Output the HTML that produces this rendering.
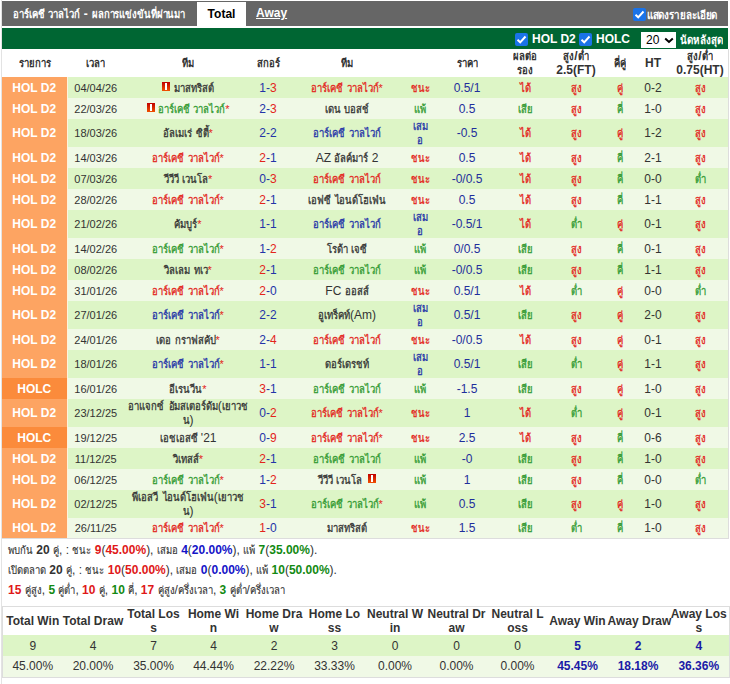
<!DOCTYPE html><html><head><meta charset="utf-8"><style>
*{margin:0;padding:0;box-sizing:border-box}
body{width:730px;height:684px;overflow:hidden;background:#fff;font-family:"Liberation Sans",sans-serif;font-size:12px;color:#333;position:relative}
i.t{font-style:normal;font-size:9.7px;font-weight:normal;-webkit-text-stroke:.25px currentColor;display:inline-block;line-height:10px;height:10px;transform:scale(.98,1.16)}
tr.hd i.t,.bar i.t,.gbar i.t{font-weight:bold;-webkit-text-stroke:0}
.vline{position:absolute;left:1px;top:0;width:1px;height:684px;background:#e3e3e3}
.bar{position:absolute;left:2px;top:1px;width:726px;height:25px;background:#666;color:#fff;font-weight:bold}
.title{position:absolute;left:11px;top:6px;white-space:nowrap}

.tab{position:absolute;left:195px;top:1px;width:49px;height:27px;background:#fff;color:#000;text-align:center;padding-top:5px;font-size:12px}
.away{position:absolute;left:254px;top:5px;text-decoration:underline;font-size:12px}
.cb{position:absolute;width:13px;height:13px;border-radius:2px;background:#1a73e8}
.cb svg{position:absolute;left:0;top:0}
.det{position:absolute;left:644px;top:7px;white-space:nowrap}
.det i.t{font-size:10px}
.gbar{position:absolute;left:2px;top:28px;width:726px;height:21px;background:#006633;color:#fff;font-weight:bold}
.gbar span.l{position:absolute;top:4px;white-space:nowrap;font-size:12px}
.sel{position:absolute;left:639px;top:4px;width:35px;height:16px;background:#fff;color:#000;font-weight:normal;font-size:12px;padding-left:5px;line-height:16px}
.last{position:absolute;left:678px;top:5px;white-space:nowrap}
.last i.t{font-size:10px}
table.m{position:absolute;left:2px;top:49px;width:726px;border-collapse:collapse;table-layout:fixed}
table.m td{text-align:center;vertical-align:middle;padding:0;line-height:14px;white-space:nowrap}
tr.hd{height:28px;background:#fff;font-weight:bold}
tr.hd td{color:#333}
tr.g1{background:#ddf5c6}
tr.g2{background:#f0f9e6}
td.hol{background:#fda462;color:#fff;font-weight:bold;border-right:1px solid #fff3dd}
td.holc{background:#fb8b3b;color:#fff;font-weight:bold;border-right:1px solid #fff3dd}
td.dt{font-size:11px;color:#333}
td.od{color:#1f2e9c}
td.ht{color:#333}
.star{color:#e3241b;font-size:11px}
.card{display:inline-block;width:8px;height:9px;background:linear-gradient(#c00000,#f05000);position:relative;vertical-align:1px}
.card:after{content:"";position:absolute;left:3px;top:1px;width:2px;height:7px;background:#fff}
.sum{position:absolute;left:8px;white-space:nowrap;color:#333}
.sum b{font-weight:bold}
.sum i.t{font-weight:normal;-webkit-text-stroke:.1px currentColor}
table.s{position:absolute;left:2px;top:606px;width:727px;border-collapse:collapse;table-layout:fixed;border:1px solid #ddd}
table.s td{text-align:center;vertical-align:middle;padding:0;line-height:14px;white-space:nowrap}
table.s tr.h{height:28px;background:#fff;font-weight:bold;color:#333}
table.s tr.v1{height:21px;background:#ddf5c6}
table.s tr.v2{height:21px;background:#f0f9e6}
table.s .aw{color:#1a1aa6;font-weight:bold}
</style></head><body>
<div class="vline"></div>
<div class="bar"><div class="title"><i class="t">อาร์เคชี</i> <i class="t">วาลไวก์</i> - <i class="t">ผลการแข่งขันที่ผ่านมา</i></div>
<div class="tab">Total</div><div class="away">Away</div>
<div class="cb" style="left:631px;top:7px"><svg width="13" height="13" viewBox="0 0 13 13"><path d="M2.5 6.8 L5.2 9.3 L10.5 3.5" stroke="#fff" stroke-width="2" fill="none"/></svg></div><div class="det"><i class="t">แสดงรายละเอียด</i></div></div>
<div class="gbar">
<div class="cb" style="left:513px;top:5px"><svg width="13" height="13" viewBox="0 0 13 13"><path d="M2.5 6.8 L5.2 9.3 L10.5 3.5" stroke="#fff" stroke-width="2" fill="none"/></svg></div><span class="l" style="left:530px">HOL D2</span>
<div class="cb" style="left:577px;top:5px"><svg width="13" height="13" viewBox="0 0 13 13"><path d="M2.5 6.8 L5.2 9.3 L10.5 3.5" stroke="#fff" stroke-width="2" fill="none"/></svg></div><span class="l" style="left:594px">HOLC</span>
<div class="sel">20<svg style="position:absolute;left:23px;top:5px" width="10" height="7" viewBox="0 0 10 7"><path d="M1.2 1.5 L5 5 L8.8 1.5" stroke="#000" stroke-width="2" fill="none"/></svg></div>
<div class="last"><i class="t">นัดหลังสุด</i></div></div>
<table class="m"><col style="width:65px"><col style="width:57px"><col style="width:128px"><col style="width:32px"><col style="width:126px"><col style="width:20px"><col style="width:74px"><col style="width:42px"><col style="width:60px"><col style="width:28px"><col style="width:38px"><col style="width:56px"><tr class="hd"><td><i class="t">รายการ</i></td><td><i class="t">เวลา</i></td><td><i class="t">ทีม</i></td><td><i class="t">สกอร์</i></td><td><i class="t">ทีม</i></td><td></td><td><i class="t">ราคา</i></td><td><i class="t">ผลต่อ</i><br><i class="t">รอง</i></td><td><i class="t">สูง</i>/<i class="t">ต่ำ</i><br>2.5(FT)</td><td><i class="t">คี่คู่</i></td><td>HT</td><td><i class="t">สูง</i>/<i class="t">ต่ำ</i><br>0.75(HT)</td></tr><tr class="g1" style="height:21px"><td class="hol">HOL D2</td><td class="dt">04/04/26</td><td class="tm"><span style="color:#333"><span class="card"></span> <i class="t">มาสทริสต์</i></span></td><td class="sc"><span style="color:#2433a8">1-</span><span style="color:#e3241b">3</span></td><td class="tm"><span style="color:#e3241b"><i class="t">อาร์เคชี</i> <i class="t">วาลไวก์</i><span class="star">*</span></span></td><td class="rs" style="color:#e3241b"><i class="t">ชนะ</i></td><td class="od">0.5/1</td><td><span style="color:#e3241b"><i class="t">ได้</i></span></td><td><span style="color:#e3241b"><i class="t">สูง</i></span></td><td><span style="color:#e3241b"><i class="t">คู่</i></span></td><td class="ht">0-2</td><td><span style="color:#e3241b"><i class="t">สูง</i></span></td></tr><tr class="g2" style="height:21px"><td class="hol">HOL D2</td><td class="dt">22/03/26</td><td class="tm"><span style="color:#319a31"><span class="card"></span> <i class="t">อาร์เคชี</i> <i class="t">วาลไวก์</i><span class="star">*</span></span></td><td class="sc"><span style="color:#2433a8">2-</span><span style="color:#e3241b">3</span></td><td class="tm"><span style="color:#333"><i class="t">เดน</i> <i class="t">บอสช์</i></span></td><td class="rs" style="color:#319a31"><i class="t">แพ้</i></td><td class="od">0.5</td><td><span style="color:#319a31"><i class="t">เสีย</i></span></td><td><span style="color:#e3241b"><i class="t">สูง</i></span></td><td><span style="color:#319a31"><i class="t">คี่</i></span></td><td class="ht">1-0</td><td><span style="color:#e3241b"><i class="t">สูง</i></span></td></tr><tr class="g1" style="height:28px"><td class="hol">HOL D2</td><td class="dt">18/03/26</td><td class="tm"><span style="color:#333"><i class="t">อัลเมเร่</i> <i class="t">ซิตี้</i><span class="star">*</span></span></td><td class="sc"><span style="color:#2433a8">2-2</span></td><td class="tm"><span style="color:#2433a8"><i class="t">อาร์เคชี</i> <i class="t">วาลไวก์</i></span></td><td class="rs" style="color:#2433a8"><i class="t">เสม</i><br><i class="t">อ</i></td><td class="od">-0.5</td><td><span style="color:#e3241b"><i class="t">ได้</i></span></td><td><span style="color:#e3241b"><i class="t">สูง</i></span></td><td><span style="color:#e3241b"><i class="t">คู่</i></span></td><td class="ht">1-2</td><td><span style="color:#e3241b"><i class="t">สูง</i></span></td></tr><tr class="g2" style="height:21px"><td class="hol">HOL D2</td><td class="dt">14/03/26</td><td class="tm"><span style="color:#e3241b"><i class="t">อาร์เคชี</i> <i class="t">วาลไวก์</i><span class="star">*</span></span></td><td class="sc"><span style="color:#e3241b">2</span><span style="color:#2433a8">-1</span></td><td class="tm"><span style="color:#333">AZ <i class="t">อัลค์มาร์</i> 2</span></td><td class="rs" style="color:#e3241b"><i class="t">ชนะ</i></td><td class="od">0.5</td><td><span style="color:#e3241b"><i class="t">ได้</i></span></td><td><span style="color:#e3241b"><i class="t">สูง</i></span></td><td><span style="color:#319a31"><i class="t">คี่</i></span></td><td class="ht">2-1</td><td><span style="color:#e3241b"><i class="t">สูง</i></span></td></tr><tr class="g1" style="height:21px"><td class="hol">HOL D2</td><td class="dt">07/03/26</td><td class="tm"><span style="color:#333"><i class="t">วีวีวี</i> <i class="t">เวนโล</i><span class="star">*</span></span></td><td class="sc"><span style="color:#2433a8">0-</span><span style="color:#e3241b">3</span></td><td class="tm"><span style="color:#e3241b"><i class="t">อาร์เคชี</i> <i class="t">วาลไวก์</i></span></td><td class="rs" style="color:#e3241b"><i class="t">ชนะ</i></td><td class="od">-0/0.5</td><td><span style="color:#e3241b"><i class="t">ได้</i></span></td><td><span style="color:#e3241b"><i class="t">สูง</i></span></td><td><span style="color:#319a31"><i class="t">คี่</i></span></td><td class="ht">0-0</td><td><span style="color:#319a31"><i class="t">ต่ำ</i></span></td></tr><tr class="g2" style="height:21px"><td class="hol">HOL D2</td><td class="dt">28/02/26</td><td class="tm"><span style="color:#e3241b"><i class="t">อาร์เคชี</i> <i class="t">วาลไวก์</i><span class="star">*</span></span></td><td class="sc"><span style="color:#e3241b">2</span><span style="color:#2433a8">-1</span></td><td class="tm"><span style="color:#333"><i class="t">เอฟซี</i> <i class="t">ไอนด์โฮเฟ่น</i></span></td><td class="rs" style="color:#e3241b"><i class="t">ชนะ</i></td><td class="od">0.5</td><td><span style="color:#e3241b"><i class="t">ได้</i></span></td><td><span style="color:#e3241b"><i class="t">สูง</i></span></td><td><span style="color:#319a31"><i class="t">คี่</i></span></td><td class="ht">1-1</td><td><span style="color:#e3241b"><i class="t">สูง</i></span></td></tr><tr class="g1" style="height:28px"><td class="hol">HOL D2</td><td class="dt">21/02/26</td><td class="tm"><span style="color:#333"><i class="t">คัมบูร์</i><span class="star">*</span></span></td><td class="sc"><span style="color:#2433a8">1-1</span></td><td class="tm"><span style="color:#2433a8"><i class="t">อาร์เคชี</i> <i class="t">วาลไวก์</i></span></td><td class="rs" style="color:#2433a8"><i class="t">เสม</i><br><i class="t">อ</i></td><td class="od">-0.5/1</td><td><span style="color:#e3241b"><i class="t">ได้</i></span></td><td><span style="color:#319a31"><i class="t">ต่ำ</i></span></td><td><span style="color:#e3241b"><i class="t">คู่</i></span></td><td class="ht">0-1</td><td><span style="color:#e3241b"><i class="t">สูง</i></span></td></tr><tr class="g2" style="height:21px"><td class="hol">HOL D2</td><td class="dt">14/02/26</td><td class="tm"><span style="color:#319a31"><i class="t">อาร์เคชี</i> <i class="t">วาลไวก์</i><span class="star">*</span></span></td><td class="sc"><span style="color:#2433a8">1-</span><span style="color:#e3241b">2</span></td><td class="tm"><span style="color:#333"><i class="t">โรด้า</i> <i class="t">เจซี</i></span></td><td class="rs" style="color:#319a31"><i class="t">แพ้</i></td><td class="od">0/0.5</td><td><span style="color:#319a31"><i class="t">เสีย</i></span></td><td><span style="color:#e3241b"><i class="t">สูง</i></span></td><td><span style="color:#319a31"><i class="t">คี่</i></span></td><td class="ht">0-1</td><td><span style="color:#e3241b"><i class="t">สูง</i></span></td></tr><tr class="g1" style="height:21px"><td class="hol">HOL D2</td><td class="dt">08/02/26</td><td class="tm"><span style="color:#333"><i class="t">วิลเลม</i> <i class="t">ทเว</i><span class="star">*</span></span></td><td class="sc"><span style="color:#e3241b">2</span><span style="color:#2433a8">-1</span></td><td class="tm"><span style="color:#319a31"><i class="t">อาร์เคชี</i> <i class="t">วาลไวก์</i></span></td><td class="rs" style="color:#319a31"><i class="t">แพ้</i></td><td class="od">-0/0.5</td><td><span style="color:#319a31"><i class="t">เสีย</i></span></td><td><span style="color:#e3241b"><i class="t">สูง</i></span></td><td><span style="color:#319a31"><i class="t">คี่</i></span></td><td class="ht">1-1</td><td><span style="color:#e3241b"><i class="t">สูง</i></span></td></tr><tr class="g2" style="height:21px"><td class="hol">HOL D2</td><td class="dt">31/01/26</td><td class="tm"><span style="color:#e3241b"><i class="t">อาร์เคชี</i> <i class="t">วาลไวก์</i><span class="star">*</span></span></td><td class="sc"><span style="color:#e3241b">2</span><span style="color:#2433a8">-0</span></td><td class="tm"><span style="color:#333">FC <i class="t">ออสส์</i></span></td><td class="rs" style="color:#e3241b"><i class="t">ชนะ</i></td><td class="od">0.5/1</td><td><span style="color:#e3241b"><i class="t">ได้</i></span></td><td><span style="color:#319a31"><i class="t">ต่ำ</i></span></td><td><span style="color:#e3241b"><i class="t">คู่</i></span></td><td class="ht">0-0</td><td><span style="color:#319a31"><i class="t">ต่ำ</i></span></td></tr><tr class="g1" style="height:28px"><td class="hol">HOL D2</td><td class="dt">27/01/26</td><td class="tm"><span style="color:#2433a8"><i class="t">อาร์เคชี</i> <i class="t">วาลไวก์</i><span class="star">*</span></span></td><td class="sc"><span style="color:#2433a8">2-2</span></td><td class="tm"><span style="color:#333"><i class="t">อูเทร็คท์</i>(Am)</span></td><td class="rs" style="color:#2433a8"><i class="t">เสม</i><br><i class="t">อ</i></td><td class="od">0.5/1</td><td><span style="color:#319a31"><i class="t">เสีย</i></span></td><td><span style="color:#e3241b"><i class="t">สูง</i></span></td><td><span style="color:#e3241b"><i class="t">คู่</i></span></td><td class="ht">2-0</td><td><span style="color:#e3241b"><i class="t">สูง</i></span></td></tr><tr class="g2" style="height:21px"><td class="hol">HOL D2</td><td class="dt">24/01/26</td><td class="tm"><span style="color:#333"><i class="t">เดอ</i> <i class="t">กราฟสคัป</i><span class="star">*</span></span></td><td class="sc"><span style="color:#2433a8">2-</span><span style="color:#e3241b">4</span></td><td class="tm"><span style="color:#e3241b"><i class="t">อาร์เคชี</i> <i class="t">วาลไวก์</i></span></td><td class="rs" style="color:#e3241b"><i class="t">ชนะ</i></td><td class="od">-0/0.5</td><td><span style="color:#e3241b"><i class="t">ได้</i></span></td><td><span style="color:#e3241b"><i class="t">สูง</i></span></td><td><span style="color:#e3241b"><i class="t">คู่</i></span></td><td class="ht">0-1</td><td><span style="color:#e3241b"><i class="t">สูง</i></span></td></tr><tr class="g1" style="height:28px"><td class="hol">HOL D2</td><td class="dt">18/01/26</td><td class="tm"><span style="color:#2433a8"><i class="t">อาร์เคชี</i> <i class="t">วาลไวก์</i><span class="star">*</span></span></td><td class="sc"><span style="color:#2433a8">1-1</span></td><td class="tm"><span style="color:#333"><i class="t">ดอร์เดรชท์</i></span></td><td class="rs" style="color:#2433a8"><i class="t">เสม</i><br><i class="t">อ</i></td><td class="od">0.5/1</td><td><span style="color:#319a31"><i class="t">เสีย</i></span></td><td><span style="color:#319a31"><i class="t">ต่ำ</i></span></td><td><span style="color:#e3241b"><i class="t">คู่</i></span></td><td class="ht">1-1</td><td><span style="color:#e3241b"><i class="t">สูง</i></span></td></tr><tr class="g2" style="height:21px"><td class="holc">HOLC</td><td class="dt">16/01/26</td><td class="tm"><span style="color:#333"><i class="t">อีเรนวีน</i><span class="star">*</span></span></td><td class="sc"><span style="color:#e3241b">3</span><span style="color:#2433a8">-1</span></td><td class="tm"><span style="color:#319a31"><i class="t">อาร์เคชี</i> <i class="t">วาลไวก์</i></span></td><td class="rs" style="color:#319a31"><i class="t">แพ้</i></td><td class="od">-1.5</td><td><span style="color:#319a31"><i class="t">เสีย</i></span></td><td><span style="color:#e3241b"><i class="t">สูง</i></span></td><td><span style="color:#e3241b"><i class="t">คู่</i></span></td><td class="ht">1-0</td><td><span style="color:#e3241b"><i class="t">สูง</i></span></td></tr><tr class="g1" style="height:28px"><td class="hol">HOL D2</td><td class="dt">23/12/25</td><td class="tm"><span style="color:#333"><i class="t">อาแจกซ์</i> <i class="t">อัมสเตอร์ดัม</i>(<i class="t">เยาวช</i><br><i class="t">น</i>)</span></td><td class="sc"><span style="color:#2433a8">0-</span><span style="color:#e3241b">2</span></td><td class="tm"><span style="color:#e3241b"><i class="t">อาร์เคชี</i> <i class="t">วาลไวก์</i><span class="star">*</span></span></td><td class="rs" style="color:#e3241b"><i class="t">ชนะ</i></td><td class="od">1</td><td><span style="color:#e3241b"><i class="t">ได้</i></span></td><td><span style="color:#319a31"><i class="t">ต่ำ</i></span></td><td><span style="color:#e3241b"><i class="t">คู่</i></span></td><td class="ht">0-1</td><td><span style="color:#e3241b"><i class="t">สูง</i></span></td></tr><tr class="g2" style="height:21px"><td class="holc">HOLC</td><td class="dt">19/12/25</td><td class="tm"><span style="color:#333"><i class="t">เอชเอสซี</i> '21</span></td><td class="sc"><span style="color:#2433a8">0-</span><span style="color:#e3241b">9</span></td><td class="tm"><span style="color:#e3241b"><i class="t">อาร์เคชี</i> <i class="t">วาลไวก์</i><span class="star">*</span></span></td><td class="rs" style="color:#e3241b"><i class="t">ชนะ</i></td><td class="od">2.5</td><td><span style="color:#e3241b"><i class="t">ได้</i></span></td><td><span style="color:#e3241b"><i class="t">สูง</i></span></td><td><span style="color:#319a31"><i class="t">คี่</i></span></td><td class="ht">0-6</td><td><span style="color:#e3241b"><i class="t">สูง</i></span></td></tr><tr class="g1" style="height:21px"><td class="hol">HOL D2</td><td class="dt">11/12/25</td><td class="tm"><span style="color:#333"><i class="t">วิเทสส์</i><span class="star">*</span></span></td><td class="sc"><span style="color:#e3241b">2</span><span style="color:#2433a8">-1</span></td><td class="tm"><span style="color:#319a31"><i class="t">อาร์เคชี</i> <i class="t">วาลไวก์</i></span></td><td class="rs" style="color:#319a31"><i class="t">แพ้</i></td><td class="od">-0</td><td><span style="color:#319a31"><i class="t">เสีย</i></span></td><td><span style="color:#e3241b"><i class="t">สูง</i></span></td><td><span style="color:#319a31"><i class="t">คี่</i></span></td><td class="ht">1-0</td><td><span style="color:#e3241b"><i class="t">สูง</i></span></td></tr><tr class="g2" style="height:21px"><td class="hol">HOL D2</td><td class="dt">06/12/25</td><td class="tm"><span style="color:#319a31"><i class="t">อาร์เคชี</i> <i class="t">วาลไวก์</i><span class="star">*</span></span></td><td class="sc"><span style="color:#2433a8">1-</span><span style="color:#e3241b">2</span></td><td class="tm"><span style="color:#333"><i class="t">วีวีวี</i> <i class="t">เวนโล</i> <span class="card" style="margin-left:3px"></span></span></td><td class="rs" style="color:#319a31"><i class="t">แพ้</i></td><td class="od">1</td><td><span style="color:#319a31"><i class="t">เสีย</i></span></td><td><span style="color:#e3241b"><i class="t">สูง</i></span></td><td><span style="color:#319a31"><i class="t">คี่</i></span></td><td class="ht">0-0</td><td><span style="color:#319a31"><i class="t">ต่ำ</i></span></td></tr><tr class="g1" style="height:28px"><td class="hol">HOL D2</td><td class="dt">02/12/25</td><td class="tm"><span style="color:#333"><i class="t">พีเอสวี</i> <i class="t">ไอนด์โฮเฟ่น</i>(<i class="t">เยาวช</i><br><i class="t">น</i>)</span></td><td class="sc"><span style="color:#e3241b">3</span><span style="color:#2433a8">-1</span></td><td class="tm"><span style="color:#319a31"><i class="t">อาร์เคชี</i> <i class="t">วาลไวก์</i><span class="star">*</span></span></td><td class="rs" style="color:#319a31"><i class="t">แพ้</i></td><td class="od">0.5</td><td><span style="color:#319a31"><i class="t">เสีย</i></span></td><td><span style="color:#e3241b"><i class="t">สูง</i></span></td><td><span style="color:#e3241b"><i class="t">คู่</i></span></td><td class="ht">1-0</td><td><span style="color:#e3241b"><i class="t">สูง</i></span></td></tr><tr class="g2" style="height:20px"><td class="hol">HOL D2</td><td class="dt">26/11/25</td><td class="tm"><span style="color:#e3241b"><i class="t">อาร์เคชี</i> <i class="t">วาลไวก์</i><span class="star">*</span></span></td><td class="sc"><span style="color:#e3241b">1</span><span style="color:#2433a8">-0</span></td><td class="tm"><span style="color:#333"><i class="t">มาสทริสต์</i></span></td><td class="rs" style="color:#e3241b"><i class="t">ชนะ</i></td><td class="od">1.5</td><td><span style="color:#319a31"><i class="t">เสีย</i></span></td><td><span style="color:#319a31"><i class="t">ต่ำ</i></span></td><td><span style="color:#319a31"><i class="t">คี่</i></span></td><td class="ht">1-0</td><td><span style="color:#e3241b"><i class="t">สูง</i></span></td></tr></table><div style="position:absolute;left:728px;top:49px;width:1px;height:490px;background:#ddd"></div><div style="position:absolute;left:2px;top:538px;width:727px;height:1px;background:#ddd"></div>
<div class="sum" style="top:543px"><i class="t">พบกัน</i> <b>20</b> <i class="t">คู่</i>, : <i class="t">ชนะ</i> <b style="color:#e01818">9</b>(<b style="color:#e01818">45.00%</b>), <i class="t">เสมอ</i> <b style="color:#1414c8">4</b>(<b style="color:#1414c8">20.00%</b>), <i class="t">แพ้</i> <b style="color:#138a13">7</b>(<b style="color:#138a13">35.00%</b>).</div><div class="sum" style="top:563px"><i class="t">เปิดตลาด</i> <b>20</b> <i class="t">คู่</i>, : <i class="t">ชนะ</i> <b style="color:#e01818">10</b>(<b style="color:#e01818">50.00%</b>), <i class="t">เสมอ</i> <b style="color:#1414c8">0</b>(<b style="color:#1414c8">0.00%</b>), <i class="t">แพ้</i> <b style="color:#138a13">10</b>(<b style="color:#138a13">50.00%</b>).</div><div class="sum" style="top:583px"><b style="color:#e01818">15</b> <i class="t">คู่สูง</i>, <b style="color:#138a13">5</b> <i class="t">คู่ต่ำ</i>, <b style="color:#e01818">10</b> <i class="t">คู่</i>, <b style="color:#138a13">10</b> <i class="t">คี่</i>, <b style="color:#e01818">17</b> <i class="t">คู่สูง</i>/<i class="t">ครึ่งเวลา</i>, <b style="color:#138a13">3</b> <i class="t">คู่ต่ำ</i>/<i class="t">ครึ่งเวลา</i></div>
<table class="s"><col style="width:60px"><col style="width:61px"><col style="width:60px"><col style="width:60px"><col style="width:61px"><col style="width:60px"><col style="width:61px"><col style="width:62px"><col style="width:60px"><col style="width:60px"><col style="width:61px"><col style="width:61px"><tr class="h"><td>Total Win</td><td>Total Draw</td><td>Total Los<br>s</td><td>Home Wi<br>n</td><td>Home Dra<br>w</td><td>Home Lo<br>ss</td><td>Neutral W<br>in</td><td>Neutral Dr<br>aw</td><td>Neutral L<br>oss</td><td>Away Win</td><td>Away Draw</td><td>Away Los<br>s</td></tr><tr class="v1"><td>9</td><td>4</td><td>7</td><td>4</td><td>2</td><td>3</td><td>0</td><td>0</td><td>0</td><td class=aw>5</td><td class=aw>2</td><td class=aw>4</td></tr><tr class="v2"><td>45.00%</td><td>20.00%</td><td>35.00%</td><td>44.44%</td><td>22.22%</td><td>33.33%</td><td>0.00%</td><td>0.00%</td><td>0.00%</td><td class=aw>45.45%</td><td class=aw>18.18%</td><td class=aw>36.36%</td></tr></table>
</body></html>
